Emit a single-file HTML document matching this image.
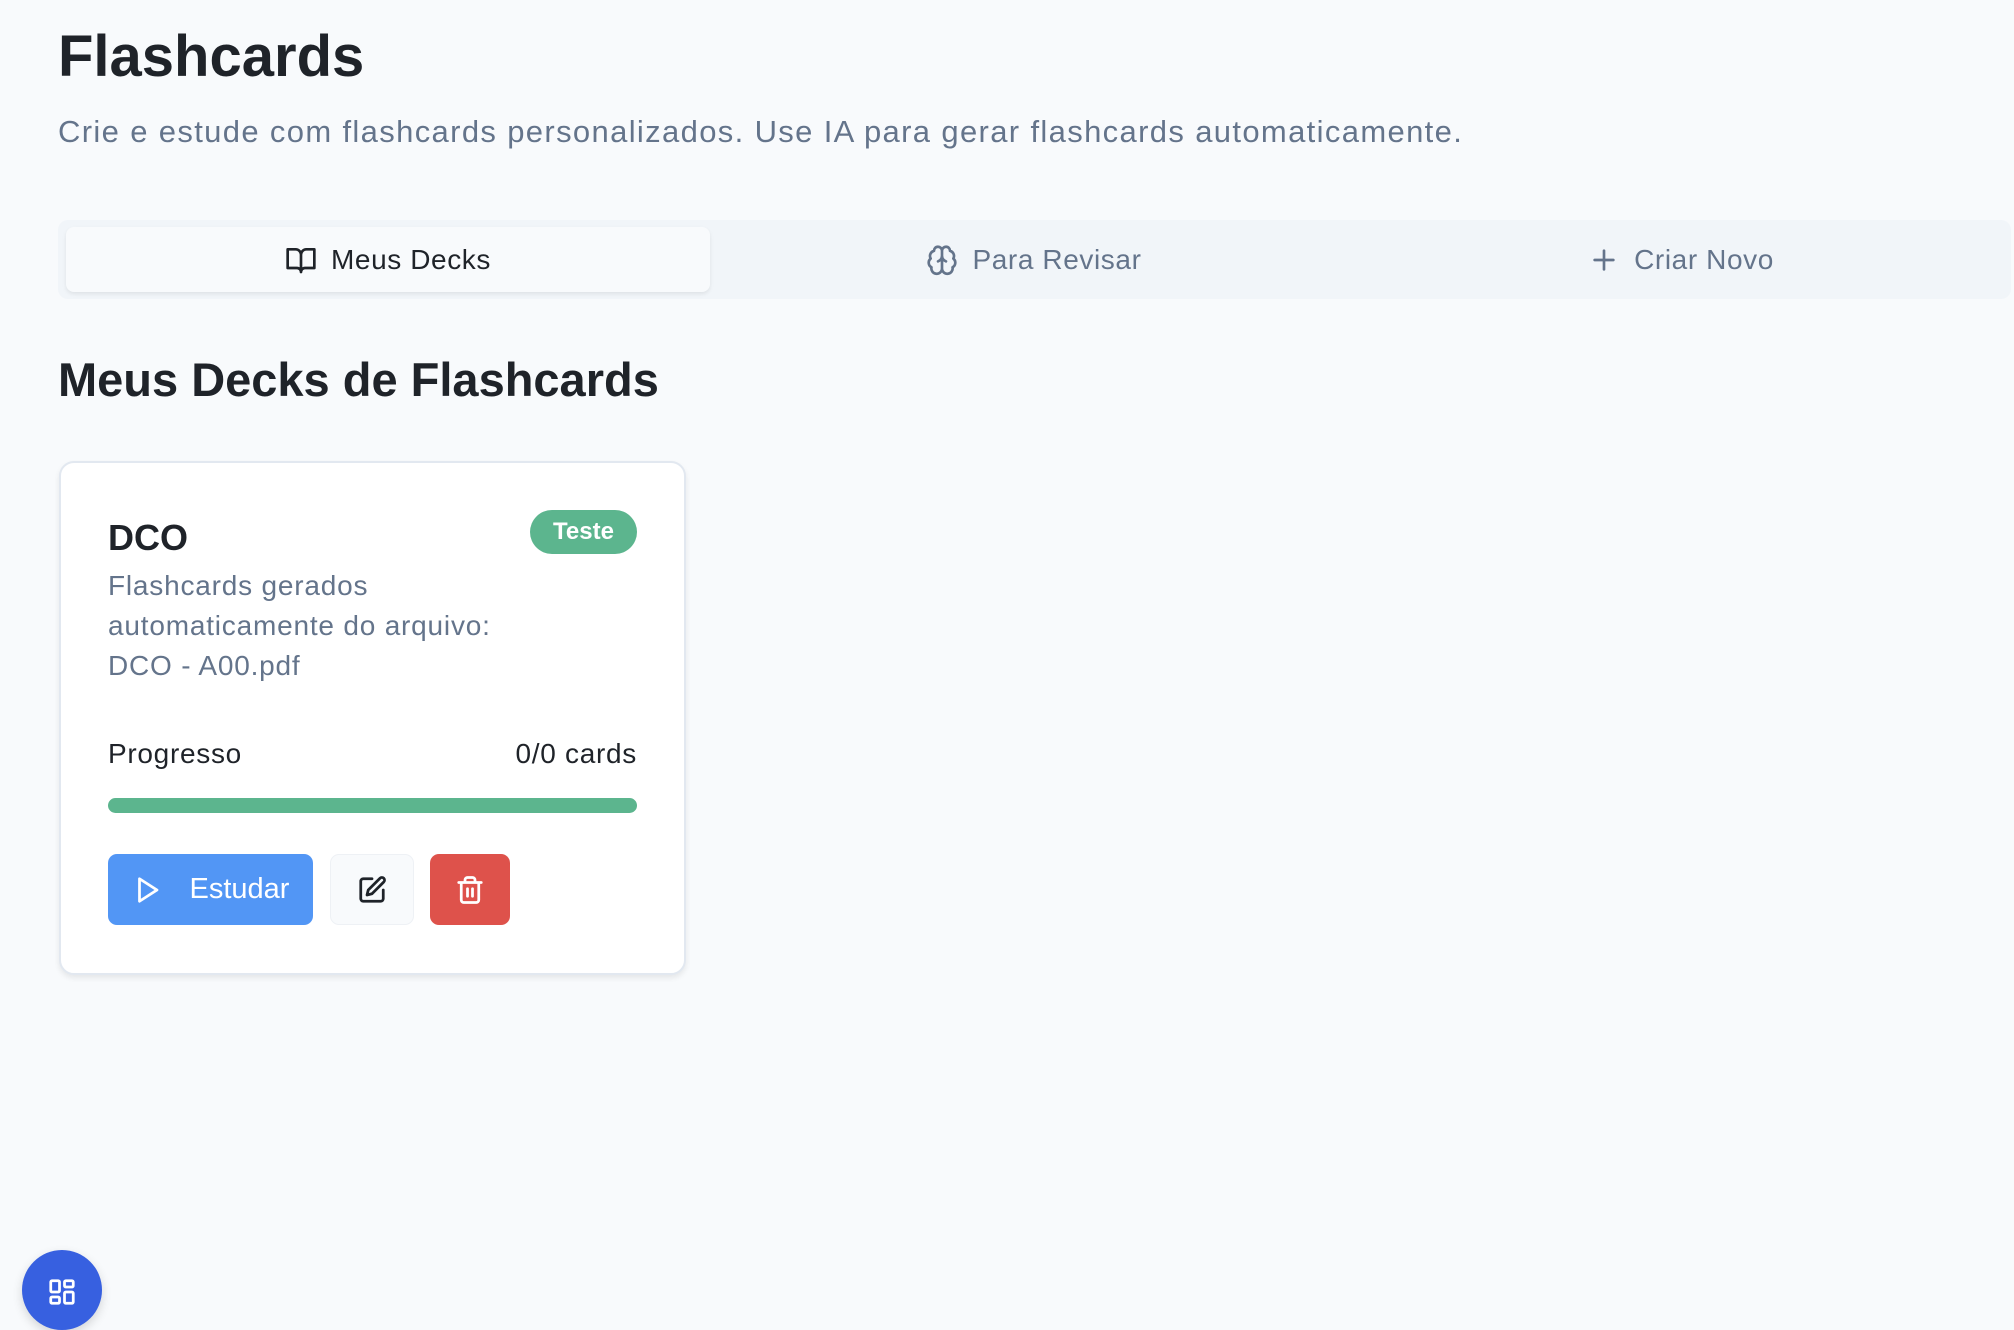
<!DOCTYPE html>
<html><head><meta charset="utf-8"><style>
*{box-sizing:border-box;margin:0;padding:0}
body{width:2014px;height:1310px;background:#f8fafc;font-family:"Liberation Sans",sans-serif;position:relative;overflow:hidden;color:#1e293b}
.a{position:absolute}
h1{position:absolute;left:58px;top:20px;font-size:58px;font-weight:bold;color:#1f2329;line-height:74px}
.sub{left:58px;top:112px;font-size:31px;color:#64748b;line-height:40px;letter-spacing:1.35px;white-space:nowrap}
.tabs{left:58px;top:220px;width:1953px;height:79px;background:#f1f5f9;border-radius:10px}
.act{left:66px;top:227px;width:644px;height:65px;background:#f8fafc;border-radius:8px;box-shadow:0 2px 4px rgba(0,0,0,.08)}
.tab{top:227px;height:65px;display:flex;align-items:center;justify-content:center;font-size:28px;letter-spacing:.6px;gap:14px;color:#64748b}
.tab svg{width:32px;height:32px;fill:none;stroke:currentColor;stroke-width:2;stroke-linecap:round;stroke-linejoin:round}
h2{position:absolute;left:58px;top:352px;font-size:47px;font-weight:bold;color:#1f2329;line-height:56px}
.card{left:59px;top:461px;width:627px;height:514px;background:#fff;border:2px solid #e2e8f0;border-radius:15px;box-shadow:0 3px 6px rgba(0,0,0,.08)}
.btn{top:854px;height:71px;border-radius:9px;display:flex;align-items:center;justify-content:center}
.btn svg{fill:none;stroke-width:2.2;stroke-linecap:round;stroke-linejoin:round}
</style></head><body>
<h1>Flashcards</h1>
<div class="a sub">Crie e estude com flashcards personalizados. Use IA para gerar flashcards automaticamente.</div>
<div class="a tabs"></div>
<div class="a act"></div>
<div class="a tab" style="left:66px;width:644px;color:#1f2329"><svg viewBox="0 0 24 24"><path d="M2 4h6a4 4 0 0 1 4 4v13a3 3 0 0 0-3-3H2zM22 4h-6a4 4 0 0 0-4 4v13a3 3 0 0 1 3-3h7z"/></svg>Meus Decks</div>
<div class="a tab" style="left:710px;width:648px"><svg viewBox="0 0 24 24"><path d="M12 5a3 3 0 1 0-6 .1 4 4 0 0 0-2.5 5.8 4 4 0 0 0 .6 6.6A4 4 0 1 0 12 18zM12 5a3 3 0 1 1 6 .1 4 4 0 0 1 2.5 5.8 4 4 0 0 1-.6 6.6A4 4 0 1 1 12 18zM12 5v13M9 13a4.5 4.5 0 0 0 3-4 4.5 4.5 0 0 0 3 4"/></svg>Para Revisar</div>
<div class="a tab" style="left:1358px;width:646px"><svg viewBox="0 0 24 24"><path d="M5 12h14M12 5v14"/></svg>Criar Novo</div>
<h2>Meus Decks de Flashcards</h2>
<div class="a card"></div>
<div class="a" style="left:108px;top:516px;font-size:36px;font-weight:bold;color:#1f2329;line-height:44px">DCO</div>
<div class="a" style="left:530px;top:510px;width:107px;height:44px;border-radius:22px;background:#5cb58e;color:#fff;font-size:24px;font-weight:bold;display:flex;align-items:center;justify-content:center">Teste</div>
<div class="a" style="left:108px;top:566px;font-size:28px;line-height:40px;color:#64748b;letter-spacing:.8px">Flashcards gerados<br>automaticamente do arquivo:<br>DCO - A00.pdf</div>
<div class="a" style="left:108px;top:736px;font-size:28px;line-height:36px;color:#1f2329;letter-spacing:.7px">Progresso</div>
<div class="a" style="right:1377px;top:736px;font-size:28px;line-height:36px;color:#1f2329;letter-spacing:.7px">0/0 cards</div>
<div class="a" style="left:108px;top:798px;width:529px;height:15px;border-radius:8px;background:#5cb58e"></div>
<div class="a btn" style="left:108px;width:205px;background:#5296f5;color:#fff;font-size:29px;gap:28px"><svg viewBox="0 0 24 24" width="30" height="30" style="stroke:#fff"><path d="M6 3l14 9-14 9z"/></svg>Estudar</div>
<div class="a btn" style="left:330px;width:84px;background:#f8fafc;border:1px solid #eef1f5"><svg viewBox="0 0 24 24" width="30" height="30" style="stroke:#1f2329"><path d="M12 3H5a2 2 0 0 0-2 2v14a2 2 0 0 0 2 2h14a2 2 0 0 0 2-2v-7"/><path d="M18.4 2.6a2.1 2.1 0 1 1 3 3L12 15l-4 1 1-4z"/></svg></div>
<div class="a btn" style="left:430px;width:80px;background:#de524b"><svg viewBox="0 0 24 24" width="30" height="30" style="stroke:#fff"><path d="M3 6h18M19 6v14a2 2 0 0 1-2 2H7a2 2 0 0 1-2-2V6M8 6V4a2 2 0 0 1 2-2h4a2 2 0 0 1 2 2v2M10 11v6M14 11v6"/></svg></div>
<div class="a" style="left:22px;top:1250px;width:80px;height:80px;border-radius:50%;background:#3760e0;box-shadow:0 4px 10px rgba(0,0,0,.15)"></div>
<svg class="a" style="left:47px;top:1277px" width="30" height="30" viewBox="0 0 24 24" fill="none" stroke="#fff" stroke-width="2.2"><rect x="3" y="3" width="7" height="9" rx="1"/><rect x="14" y="3" width="7" height="5" rx="1"/><rect x="14" y="12" width="7" height="9" rx="1"/><rect x="3" y="16" width="7" height="5" rx="1"/></svg>
</body></html>
